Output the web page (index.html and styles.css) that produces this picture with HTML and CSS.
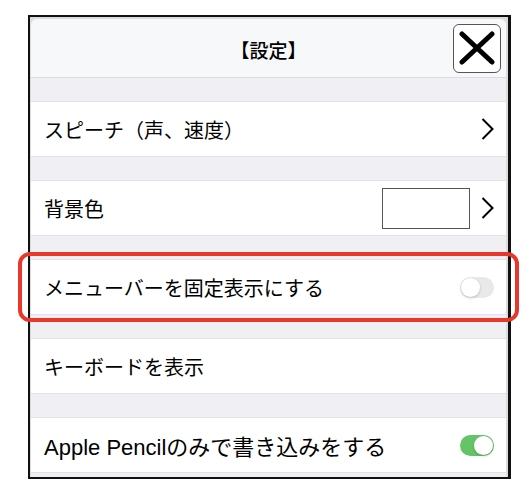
FILE: index.html
```html
<!DOCTYPE html>
<html lang="ja">
<head>
    <meta charset="UTF-8">
    <title>設定</title>
    <link rel="stylesheet" href="styles.css">
</head>
<body>
    <div class="frame">
        <div class="sheet">
            <div class="header">
                <span></span>
                <h1 class="title">【設定】</h1>
                <button class="close" aria-label="閉じる">
                    <svg width="36" height="34" viewBox="0 0 36 34">
                        <path d="M3 3 L33 31 M33 3 L3 31" stroke="#000" stroke-width="5" stroke-linecap="round" fill="none"/>
                    </svg>
                </button>
            </div>

            <div class="gap first"></div>
            <div class="row">
                <span class="label">スピーチ（声、速度）</span>
                <svg class="chevron" width="13" height="22" viewBox="0 0 13 22"><polyline points="1.5,1 11.5,11 1.5,21" /></svg>
            </div>

            <div class="gap"></div>
            <div class="row">
                <span class="label">背景色</span>
                <div class="tail">
                    <div class="swatch"></div>
                    <svg class="chevron" width="13" height="22" viewBox="0 0 13 22"><polyline points="1.5,1 11.5,11 1.5,21" /></svg>
                </div>
            </div>

            <div class="gap"></div>
            <div class="row">
                <span class="label">メニューバーを固定表示にする</span>
                <div class="switch"><div class="knob"></div></div>
            </div>

            <div class="gap"></div>
            <div class="row">
                <span class="label">キーボードを表示</span>
            </div>

            <div class="gap"></div>
            <div class="row">
                <span class="label large"><span class="latin">Apple Pencil</span>のみで書き込みをする</span>
                <div class="switch on"><div class="knob"></div></div>
            </div>
            <div class="gap last"></div>
        </div>
    </div>

    <!-- annotation around the menu bar option -->
    <div class="highlight"></div>
</body>
</html>
```

FILE: styles.css
```css
body {
    margin: 0;
    background: #fff;
    font-family: "Noto Sans CJK JP", "Noto Sans", sans-serif;
    color: #000;
}
.frame {
    margin: 15px 0 0 28px;
    width: 475px;
    border: 2px solid #111;
    border-right-width: 3px;
    background: #dcdcdc;
    padding: 2px 2px 0 1px;
}
.sheet {
    background: #efeff4;
    border-radius: 6px 6px 0 0;
    overflow: hidden;
}
.header {
    height: 58px;
    display: grid;
    grid-template-columns: 1fr auto 1fr;
    align-items: center;
    background: #f7f8fa;
    border-bottom: 1px solid #dcdce0;
}
.title {
    margin: 0;
    font-size: 19px;
    font-weight: 500;
    padding-top: 2px;
}
.close {
    justify-self: end;
    margin-right: 5px;
    width: 48px;
    height: 49px;
    padding: 0;
    display: flex;
    align-items: center;
    justify-content: center;
    background: #fff;
    border: 1px solid #555;
    border-radius: 6px;
}
.gap {
    height: 24px;
}
.gap.last {
    height: 4px;
}
.row {
    height: 54px;
    display: flex;
    align-items: center;
    justify-content: space-between;
    padding: 0 12px 0 13px;
    background: #fff;
    border-top: 1px solid #e2e2e6;
    border-bottom: 1px solid #e2e2e6;
    margin-top: -1px;
}
.label {
    font-size: 20px;
}
.label.large {
    font-size: 22px;
}
.latin {
    font-family: "Liberation Sans", "Noto Sans", sans-serif;
}
.chevron polyline {
    fill: none;
    stroke: #000;
    stroke-width: 2;
}
.tail {
    display: flex;
    align-items: center;
    gap: 11px;
}
.swatch {
    width: 86px;
    height: 39px;
    border: 1px solid #555;
    background: #fff;
}
.switch {
    width: 34px;
    height: 21px;
    border-radius: 11px;
    background: #e9e9eb;
    position: relative;
}
.knob {
    position: absolute;
    top: 1px;
    left: 1px;
    width: 19px;
    height: 19px;
    border-radius: 50%;
    background: #fff;
    box-shadow: 0 1px 3px rgba(0, 0, 0, 0.2);
}
.switch.on {
    background: #65c466;
}
.switch.on .knob {
    left: 14px;
}
.highlight {
    position: absolute;
    left: 18px;
    top: 252px;
    width: 493px;
    height: 62px;
    border: 4px solid #e6382b;
    border-radius: 12px;
}
```
